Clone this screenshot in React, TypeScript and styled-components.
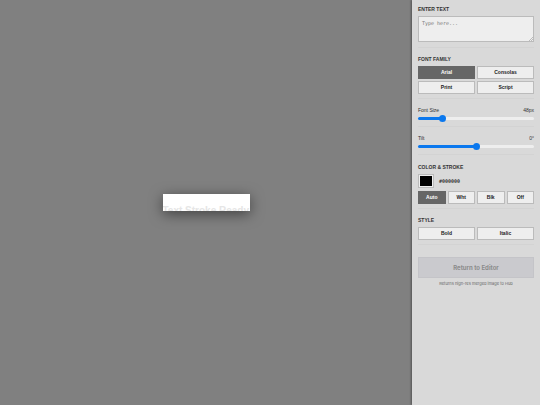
import React, { useState } from "react";
import styled, { createGlobalStyle } from "styled-components";

const Global = createGlobalStyle`
  * { box-sizing: border-box; }
  body { margin: 0; background: #808080; font-family: "Liberation Sans", Arial, sans-serif; color: #333; }
`;

const Page = styled.div`
  display: grid;
  grid-template-columns: minmax(0, 1fr) 128px;
  min-height: 100vh;
`;

const Stage = styled.main`
  display: flex;
  align-items: center;
  justify-content: center;
  background: #808080;
`;

const Artboard = styled.div`
  width: 87px;
  height: 17px;
  padding-top: 11px;
  overflow: hidden;
  background: #fff;
  color: #e6e6e6;
  font-size: 10px;
  line-height: 12px;
  font-weight: bold;
  white-space: nowrap;
  box-shadow: 0 3px 14px rgba(0, 0, 0, 0.5);
`;

const Sidebar = styled.aside`
  padding: 0 6px;
  background: #d9d9d9;
  box-shadow: -1px 0 2px rgba(0, 0, 0, 0.35);
`;

const Section = styled.section<{ $gap?: number }>`
  padding: 6px 0 4px;
  margin-bottom: ${(p) => p.$gap ?? 2}px;
  border-bottom: 1px solid #d3d3d3;
`;

const Title = styled.h2`
  margin: 0 0 3px;
  font-size: 5px;
  line-height: 7px;
  font-weight: bold;
`;

const TextLabel = styled.label`
  display: block;
`;

const TextBox = styled.textarea`
  display: block;
  width: 100%;
  height: 26px;
  margin-bottom: 1px;
  padding: 3px;
  border: 1px solid #bbb;
  border-radius: 0;
  background: #eee;
  font: 5px/6px "DejaVu Sans Mono", monospace;
  resize: none;
  &::placeholder { color: #777; }
`;

const TextField = styled.div`
  position: relative;
`;

const Grip = styled.svg`
  position: absolute;
  right: 1px;
  bottom: 1px;
  width: 4px;
  height: 4px;
  pointer-events: none;
`;

const Options = styled.div<{ $columns: number }>`
  display: grid;
  grid-template-columns: repeat(${(p) => p.$columns}, minmax(0, 1fr));
  gap: 2px;
`;

const Option = styled.button<{ $active?: boolean }>`
  height: 13px;
  padding: 0;
  border: 1px solid ${(p) => (p.$active ? "#666" : "#bbb")};
  background: ${(p) => (p.$active ? "#666" : "#eee")};
  color: ${(p) => (p.$active ? "#fff" : "#222")};
  font: bold 5px/7px "Liberation Sans", Arial, sans-serif;
`;

const RangeLabel = styled.label`
  display: flex;
  justify-content: space-between;
  margin-bottom: 1px;
  font-size: 5px;
  line-height: 7px;
`;

const Range = styled.input<{ $fill: number }>`
  appearance: none;
  display: block;
  width: 100%;
  height: 7px;
  margin: 0;
  background: transparent;
  &::-webkit-slider-runnable-track {
    height: 3px;
    border-radius: 2px;
    background: linear-gradient(to right, #0b78ee ${(p) => p.$fill}%, #eee ${(p) => p.$fill}%);
  }
  &::-webkit-slider-thumb {
    appearance: none;
    width: 7px;
    height: 7px;
    margin-top: -2px;
    border-radius: 50%;
    background: #0b78ee;
  }
`;

const ColorRow = styled.label`
  display: flex;
  align-items: center;
  gap: 5px;
  margin-bottom: 3px;
  font: bold 5px/7px "DejaVu Sans Mono", monospace;
`;

const Swatch = styled.input`
  width: 16px;
  height: 14px;
  padding: 1px;
  border: 1px solid #bbb;
  background: #eee;
  &::-webkit-color-swatch-wrapper { padding: 0; }
  &::-webkit-color-swatch { border: 0; border-radius: 0; }
`;

const Return = styled.button`
  display: block;
  width: 100%;
  height: 21px;
  margin-top: 12px;
  padding: 0;
  border: 1px solid #c4c4c8;
  background: #cacace;
  color: #8c8c8c;
  font: bold 6px/8px Inter, sans-serif;
`;

const Note = styled.p`
  margin: 2px 0 0;
  color: #666;
  font: 4px/7px Inter, sans-serif;
  text-align: center;
`;

interface ChoiceProps {
  items: string[];
  columns: number;
  initial?: string;
}

function Choices({ items, columns, initial }: ChoiceProps) {
  const [active, setActive] = useState(initial);
  return (
    <Options $columns={columns}>
      {items.map((item) => (
        <Option key={item} type="button" $active={item === active} aria-pressed={item === active} onClick={() => setActive(item)}>
          {item}
        </Option>
      ))}
    </Options>
  );
}

interface SliderProps {
  id: string;
  label: string;
  unit: string;
  min: number;
  max: number;
  initial: number;
  gap?: number;
}

function Slider({ id, label, unit, min, max, initial, gap }: SliderProps) {
  const [value, setValue] = useState(initial);
  return (
    <Section $gap={gap}>
      <RangeLabel htmlFor={id}><span>{label}</span><span>{value}{unit}</span></RangeLabel>
      <Range id={id} type="range" min={min} max={max} value={value} $fill={((value - min) / (max - min)) * 100} onChange={(e) => setValue(Number(e.target.value))} />
    </Section>
  );
}

export default function App() {
  const [color, setColor] = useState("#000000");
  return (
    <>
      <Global />
      <Page>
        <Stage><Artboard>Text Stroke Ready</Artboard></Stage>
        <Sidebar>
          <Section>
            <TextLabel htmlFor="text"><Title>ENTER TEXT</Title></TextLabel>
            <TextField>
              <TextBox id="text" placeholder="Type here..." />
              <Grip viewBox="0 0 4 4" aria-hidden="true"><path d="M0 4 4 0M2 4 4 2" stroke="#888" strokeWidth="0.5" /></Grip>
            </TextField>
          </Section>
          <Section>
            <Title>FONT FAMILY</Title>
            <Choices columns={2} items={["Arial", "Consolas", "Print", "Script"]} initial="Arial" />
          </Section>
          <Slider id="size" label="Font Size" unit="px" min={12} max={200} initial={48} />
          <Slider id="tilt" label="Tilt" unit="°" min={-45} max={45} initial={0} gap={3} />
          <Section>
            <Title>COLOR &amp; STROKE</Title>
            <ColorRow>
              <Swatch type="color" value={color} onChange={(e) => setColor(e.target.value)} />
              {color}
            </ColorRow>
            <Choices columns={4} items={["Auto", "Wht", "Blk", "Off"]} initial="Auto" />
          </Section>
          <Section>
            <Title>STYLE</Title>
            <Choices columns={2} items={["Bold", "Italic"]} />
          </Section>
          <Return type="button" disabled>Return to Editor</Return>
          <Note>Returns high-res merged image to Hub</Note>
        </Sidebar>
      </Page>
    </>
  );
}
